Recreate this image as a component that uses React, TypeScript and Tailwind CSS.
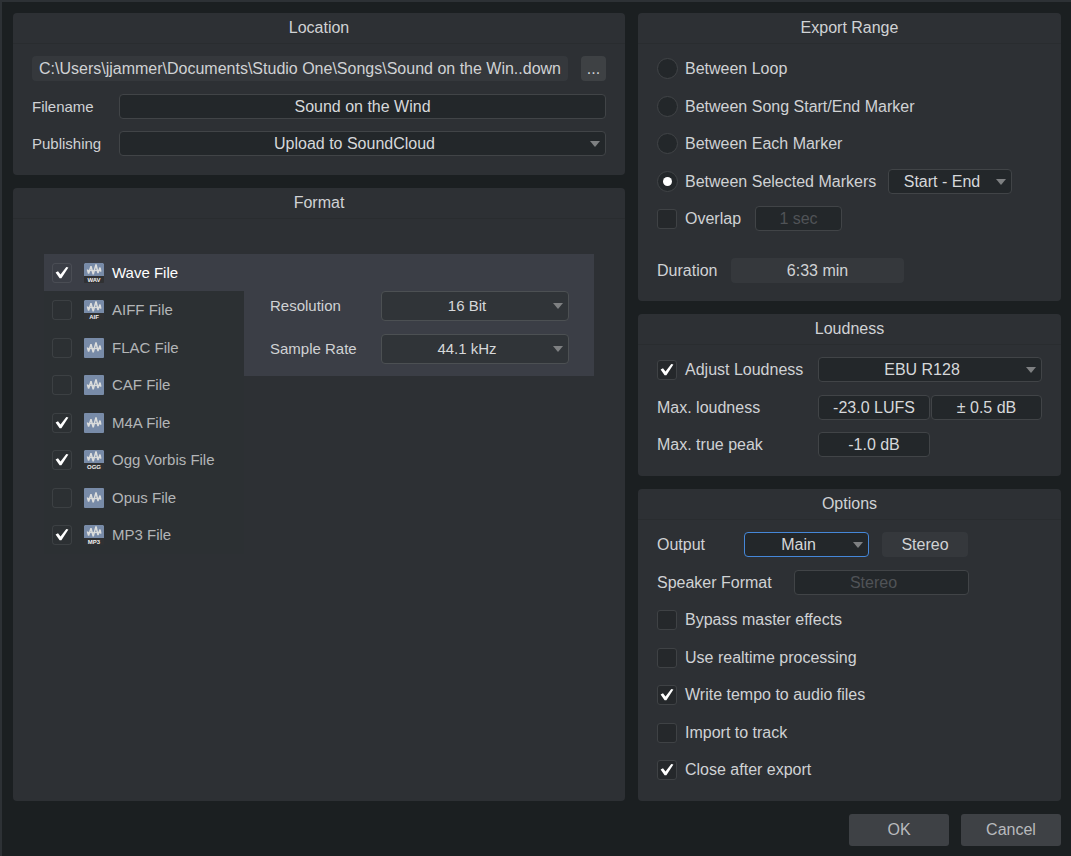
import { useState } from "react";
import type { ReactNode } from "react";
import clsx from "clsx";

interface FileFormat {
  name: string;
  badge?: string;
}

const FORMATS: FileFormat[] = [
  { name: "Wave File", badge: "WAV" },
  { name: "AIFF File", badge: "AIF" },
  { name: "FLAC File" },
  { name: "CAF File" },
  { name: "M4A File" },
  { name: "Ogg Vorbis File", badge: "OGG" },
  { name: "Opus File" },
  { name: "MP3 File", badge: "MP3" },
];

const RANGES = ["Between Loop", "Between Song Start/End Marker", "Between Each Marker"];

const FIELD =
  "h-[25px] min-w-0 rounded-sm border border-[#414447] bg-[#23272a] text-center text-[#d6d8da] outline-none disabled:text-[#505357] disabled:opacity-100";
const READOUT =
  "flex h-[25px] min-w-0 items-center justify-center rounded-sm bg-[#35383c] whitespace-nowrap";

function Panel({ title, className, children }: { title: string; className?: string; children: ReactNode }) {
  return (
    <section className={clsx("flex flex-col rounded-[4px] bg-[#2d3034]", className)}>
      <h2 className="flex h-[31px] items-center justify-center border-b border-[#292c2f]">{title}</h2>
      {children}
    </section>
  );
}

function Row({ children }: { children: ReactNode }) {
  return <div className="flex h-[25px] items-center not-last:mb-3 not-last:odd:mb-[13px]">{children}</div>;
}

interface SelectProps {
  id?: string;
  label?: string;
  options: string[];
  className?: string;
  fieldClass?: string;
  disabled?: boolean;
}

function Select({ id, label, options, className, fieldClass, disabled }: SelectProps) {
  return (
    <span className={clsx("grid items-center", className)}>
      <select
        id={id}
        aria-label={label}
        disabled={disabled}
        className={clsx(FIELD, "col-start-1 row-start-1 w-full appearance-none pr-4 [text-align-last:center]", fieldClass)}
      >
        {options.map((o) => (
          <option key={o}>{o}</option>
        ))}
      </select>
      {!disabled && (
        <svg className="pointer-events-none col-start-1 row-start-1 mr-1.5 h-1.5 w-2.5 justify-self-end" viewBox="0 0 10 6">
          <path d="M0 0h10L5 6z" fill="#7e8082" />
        </svg>
      )}
    </span>
  );
}

interface CheckProps {
  children: ReactNode;
  defaultChecked?: boolean;
  className?: string;
}

function CheckMark() {
  return (
    <svg className="pointer-events-none invisible col-start-1 row-start-1 size-5 peer-checked:visible" viewBox="0 0 20 20">
      <path d="M3.6 9.4L6 8.2l2.5 3.4L14.3 4l2.1.6-7 10.6H7.6z" fill="#fff" />
    </svg>
  );
}

function Check({ children, defaultChecked, className }: CheckProps) {
  return (
    <label className={clsx("flex items-center gap-2 whitespace-nowrap", className)}>
      <span className="grid">
        <input
          type="checkbox"
          defaultChecked={defaultChecked}
          className="peer col-start-1 row-start-1 size-5 appearance-none rounded-[3px] border border-[#3f4245] bg-[#25282b]"
        />
        <CheckMark />
      </span>
      {children}
    </label>
  );
}

function Radio({ children, defaultChecked, className }: CheckProps) {
  return (
    <label className={clsx("flex items-center gap-[7px] whitespace-nowrap", className)}>
      <span className="grid place-items-center">
        <input
          type="radio"
          name="range"
          defaultChecked={defaultChecked}
          className="peer col-start-1 row-start-1 size-[21px] appearance-none rounded-full border border-[#414447] bg-[#23272a]"
        />
        <span className="pointer-events-none invisible col-start-1 row-start-1 size-[9px] rounded-full bg-white peer-checked:visible" />
      </span>
      {children}
    </label>
  );
}

function FileIcon({ badge }: { badge?: string }) {
  return (
    <svg className="size-5 shrink-0" viewBox="0 0 20 20">
      <rect width="20" height="20" rx="1" fill={badge ? "#303133" : "#788ba8"} />
      {badge && <path d="M1 0h18l1 1v12H0V1z" fill="#788ba8" />}
      <g
        fill="none"
        stroke="#dcdddc"
        strokeLinejoin="bevel"
        transform={badge ? "translate(0 -3)" : undefined}
      >
        <path d="M3 10.6h14" strokeWidth="1" />
        <path d="M3.4 9.6L4.6 13.4 7 6.2 9.2 14.4 12 4.4 14 13 16 7.6 16.8 11.6" strokeWidth="1.5" />
      </g>
      {badge && (
        <text x="10" y="19" textAnchor="middle" fontSize="6" fontWeight="700" fill="#f2f2f2">
          {badge}
        </text>
      )}
    </svg>
  );
}

export default function App() {
  const [selected, setSelected] = useState("Wave File");
  const [enabled, setEnabled] = useState(["Wave File", "M4A File", "Ogg Vorbis File", "MP3 File"]);

  const toggle = (name: string) =>
    setEnabled((prev) => (prev.includes(name) ? prev.filter((n) => n !== name) : [...prev, name]));

  return (
    <main className="flex min-h-screen flex-col border-t-2 border-l-2 border-[#2d3135] bg-[#1b1f21] pt-[11px] pr-2.5 pb-2.5 pl-[11px] font-['Liberation_Sans',Arial,sans-serif] text-base leading-5 text-[#d0d2d4]">
      <div className="grid flex-1 grid-cols-[minmax(0,612fr)_minmax(0,423fr)] gap-[13px]">
        <div className="flex flex-col gap-[13px]">
          <Panel title="Location">
            <div className="px-[19px] pt-3 pb-[19px]">
              <Row>
                <div className={clsx(READOUT, "flex-1")}>{"C:\\Users\\jjammer\\Documents\\Studio One\\Songs\\Sound on the Win..down"}</div>
                <button aria-label="Browse" className="ml-[13px] size-[25px] rounded-sm bg-[#3e4144]">...</button>
              </Row>
              <Row>
                <label htmlFor="filename" className="w-[87px] text-[15px]">Filename</label>
                <input id="filename" defaultValue="Sound on the Wind" className={clsx(FIELD, "flex-1")} />
              </Row>
              <Row>
                <label htmlFor="publishing" className="w-[87px] text-[15px]">Publishing</label>
                <Select id="publishing" options={["Upload to SoundCloud", "None"]} className="flex-1" />
              </Row>
            </div>
          </Panel>

          <Panel title="Format" className="flex-1">
            <div className="flex items-start px-[31px] pt-[35px] text-[15px]">
              <ul className="w-[200px] bg-[#2c3033]">
                {FORMATS.map((f) => (
                  <li
                    key={f.name}
                    onClick={() => setSelected(f.name)}
                    className={clsx(
                      "flex h-[37px] items-center pl-2 even:h-[38px]",
                      selected === f.name ? "bg-[#3b3e46] text-white" : "text-[#b3b5b7]"
                    )}
                  >
                    <label className="flex items-center whitespace-nowrap">
                      <span className="grid">
                        <input
                          type="checkbox"
                          checked={enabled.includes(f.name)}
                          onChange={() => toggle(f.name)}
                          className="peer col-start-1 row-start-1 size-5 appearance-none rounded-[3px] border border-white/8"
                        />
                        <CheckMark />
                      </span>
                      <span className="mr-2 ml-3">
                        <FileIcon badge={f.badge} />
                      </span>
                      {f.name}
                    </label>
                  </li>
                ))}
              </ul>
              <div className="flex flex-1 flex-col gap-[13px] bg-[#3b3e46] pt-[37px] pr-[25px] pb-3 pl-[26px]">
                <div className="flex items-center">
                  <label htmlFor="resolution" className="w-[111px]">Resolution</label>
                  <Select id="resolution" options={["16 Bit", "24 Bit", "32 Bit Float"]} className="flex-1" fieldClass="h-[30px]! border-[#4c5053]! bg-[#303438]!" />
                </div>
                <div className="flex items-center">
                  <label htmlFor="rate" className="w-[111px]">Sample Rate</label>
                  <Select id="rate" options={["44.1 kHz", "48 kHz", "96 kHz"]} className="flex-1" fieldClass="h-[30px]! border-[#4c5053]! bg-[#303438]!" />
                </div>
              </div>
            </div>
          </Panel>
        </div>

        <div className="flex flex-col gap-[13px]">
          <Panel title="Export Range">
            <div className="px-[19px] pt-3 pb-[18px]">
              {RANGES.map((r) => (
                <Row key={r}>
                  <Radio>{r}</Radio>
                </Row>
              ))}
              <Row>
                <Radio defaultChecked className="w-[231px]">Between Selected Markers</Radio>
                <Select label="Markers" options={["Start - End", "Custom"]} className="w-[124px]" />
              </Row>
              <Row>
                <Check className="w-[98px]">Overlap</Check>
                <input aria-label="Overlap length" disabled defaultValue="1 sec" className={clsx(FIELD, "w-[87px]")} />
              </Row>
              <div className="mt-[27px] flex items-center">
                <span className="w-[74px]">Duration</span>
                <span className={clsx(READOUT, "w-[173px]")}>6:33 min</span>
              </div>
            </div>
          </Panel>

          <Panel title="Loudness">
            <div className="px-[19px] pt-3 pb-[19px]">
              <Row>
                <Check defaultChecked className="w-[161px]">Adjust Loudness</Check>
                <Select label="Loudness standard" options={["EBU R128", "Custom"]} className="flex-1" />
              </Row>
              <Row>
                <label htmlFor="max-loudness" className="w-[161px]">Max. loudness</label>
                <input id="max-loudness" defaultValue="-23.0 LUFS" className={clsx(FIELD, "mr-px w-28")} />
                <input aria-label="Loudness tolerance" defaultValue="± 0.5 dB" className={clsx(FIELD, "flex-1")} />
              </Row>
              <Row>
                <label htmlFor="true-peak" className="w-[161px]">Max. true peak</label>
                <input id="true-peak" defaultValue="-1.0 dB" className={clsx(FIELD, "w-28")} />
              </Row>
            </div>
          </Panel>

          <Panel title="Options" className="flex-1">
            <div className="px-[19px] pt-3 pb-[19px]">
              <Row>
                <label htmlFor="output" className="w-[87px]">Output</label>
                <Select id="output" options={["Main", "Sub Out"]} className="mr-[13px] w-[125px]" fieldClass="border-[#4587d8]!" />
                <span className={clsx(READOUT, "w-[86px]")}>Stereo</span>
              </Row>
              <Row>
                <label htmlFor="speaker" className="w-[137px]">Speaker Format</label>
                <Select id="speaker" options={["Stereo"]} disabled className="w-[175px]" />
              </Row>
              <Row><Check>Bypass master effects</Check></Row>
              <Row><Check>Use realtime processing</Check></Row>
              <Row><Check defaultChecked>Write tempo to audio files</Check></Row>
              <Row><Check>Import to track</Check></Row>
              <Row><Check defaultChecked>Close after export</Check></Row>
            </div>
          </Panel>
        </div>
      </div>

      <div className="mt-[13px] flex justify-end gap-3 text-[#b8babd]">
        <button className="h-8 w-[100px] rounded-[3px] bg-[#3e4145]">OK</button>
        <button className="h-8 w-[100px] rounded-[3px] bg-[#3e4145]">Cancel</button>
      </div>
    </main>
  );
}
